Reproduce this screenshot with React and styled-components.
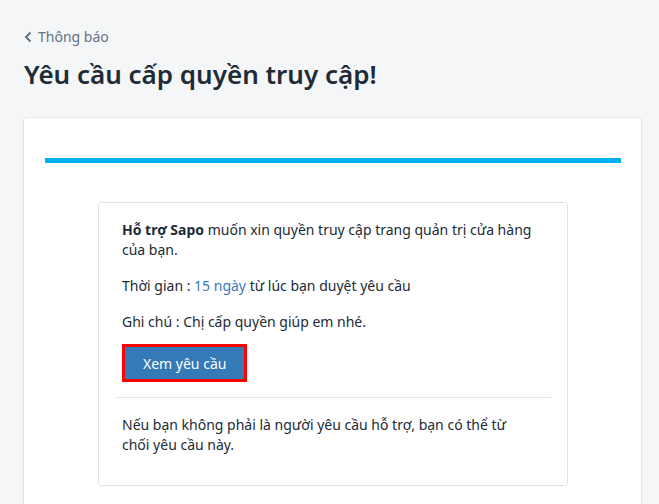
import React from "react";
import styled, { createGlobalStyle } from "styled-components";

const GlobalStyle = createGlobalStyle`
  html, body {
    margin: 0;
    padding: 0;
    background: #f4f6f8;
    font-family: "Noto Sans", "Open Sans", sans-serif;
    color: #212b35;
  }
`;

const Page = styled.div`
  padding: 26px 18px 0 24px;
  min-height: 504px;
  box-sizing: border-box;
`;

const Back = styled.a`
  display: inline-flex;
  align-items: center;
  gap: 6px;
  font-size: 14px;
  line-height: 18px;
  color: #637381;
  text-decoration: none;
`;

const Title = styled.h1`
  margin: 8px 0 0;
  font-size: 26px;
  line-height: 36px;
  font-weight: 600;
  color: #212b35;
`;

const Card = styled.div`
  margin-top: 26px;
  background: #fff;
  border-radius: 3px;
  box-shadow: 0 0 0 1px rgba(63, 63, 68, 0.05), 0 1px 3px 0 rgba(63, 63, 68, 0.15);
  padding: 40px 20px 40px 21px;
`;

const Bar = styled.div`
  height: 5px;
  background: #00b0f0;
`;

const Box = styled.div`
  width: 470px;
  box-sizing: border-box;
  margin: 39px auto 0;
  border: 1px solid #dfe3e8;
  border-radius: 3px;
  padding: 17px 0 30px;
`;

const Section = styled.div`
  padding: 0 30px 0 23px;
`;

const Text = styled.p`
  margin: 0 0 16px;
  font-size: 14px;
  line-height: 20px;
  &:last-child {
    margin-bottom: 0;
  }
`;

const Link = styled.span`
  color: #3a79c1;
`;

const Button = styled.button`
  margin-top: -4px;
  height: 38px;
  padding: 0 18px;
  background: #337ab7;
  border: 3px solid #f00;
  color: #fff;
  font-family: inherit;
  font-size: 14px;
`;

const Divider = styled.hr`
  margin: 15px 16px 17px;
  border: 0;
  border-top: 1px solid #e3e6ea;
`;

const Chevron = () => (
  <svg width="8" height="12" viewBox="0 0 8 12">
    <path d="M6.5 1.5 2 6l4.5 4.5" fill="none" stroke="#637381" strokeWidth="2" />
  </svg>
);

export default function App() {
  return (
    <>
      <GlobalStyle />
      <Page>
        <Back href="#">
          <Chevron />
          Thông báo
        </Back>
        <Title>Yêu cầu cấp quyền truy cập!</Title>
        <Card>
          <Bar />
          <Box>
            <Section>
              <Text>
                <b>Hỗ trợ Sapo</b> muốn xin quyền truy cập trang quản trị cửa hàng của bạn.
              </Text>
              <Text>
                Thời gian : <Link>15 ngày</Link> từ lúc bạn duyệt yêu cầu
              </Text>
              <Text>Ghi chú : Chị cấp quyền giúp em nhé.</Text>
              <Button>Xem yêu cầu</Button>
            </Section>
            <Divider />
            <Section>
              <Text>
                Nếu bạn không phải là người yêu cầu hỗ trợ, bạn có thể từ chối yêu cầu này.
              </Text>
            </Section>
          </Box>
        </Card>
      </Page>
    </>
  );
}
